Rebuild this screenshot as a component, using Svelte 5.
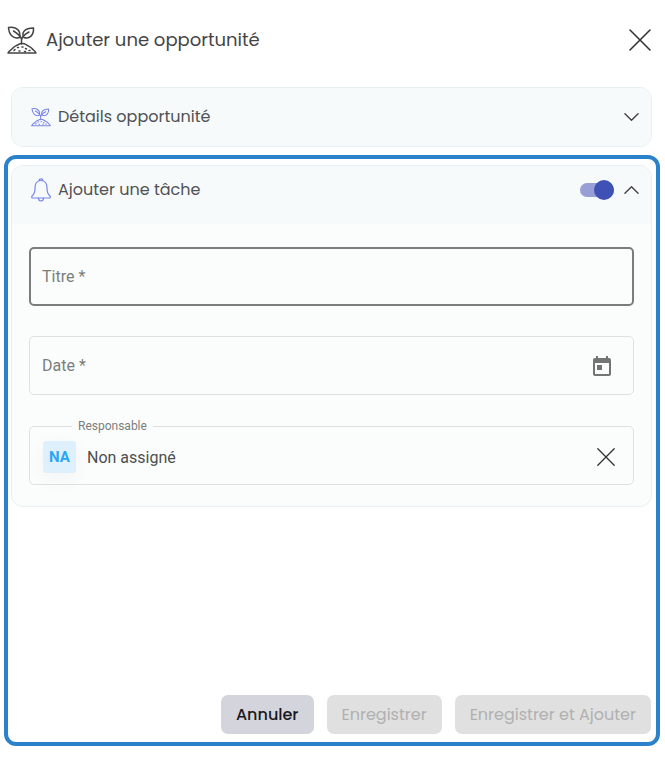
<script lang="ts">
  let title = $state('');
  let date = $state('');
  let assignee = $state('Non assigné');
  let detailsOpen = $state(false);
  let taskOpen = $state(true);
  let taskEnabled = $state(true);

  const canSave = $derived(title !== '' && date !== '');
</script>

{#snippet sprout()}
  <svg class="sprout" viewBox="0 0 30 30" aria-hidden="true">
    <path d="M14.500 19V14C13.500 10.500 10.500 8.500 6.500 6M14.500 15C15 11 18 9 22 7" />
    <path d="M12.500 12.500C6.500 14.500 2 10 1.500 2.500C8 1 14.500 5 12.500 12.500Z" />
    <path d="M17 12.500C14 8 17.500 3 26.500 3C27 10 22.500 14.500 17 12.500Z" />
    <path d="M1 28H29C28 25.500 26.500 25.500 25 23.500C23.500 21.500 21 21.500 19 19.500C17 18 13 18 11.500 19.500C9 21 7 21 5.500 23.500C4 25 2 25.500 1 28Z" />
    <path d="M7 25.500l1-1M10.500 22.500h1M12 26h1M15 22h1M18.500 23.500l1 .5M17.500 26.500h1M22 25.500h1" />
  </svg>
{/snippet}

{#snippet chevron(up: boolean)}
  <svg class="chevron" class:up viewBox="0 0 16 10" aria-hidden="true">
    <path d="M1 1.500L8 8.500L15 1.500" />
  </svg>
{/snippet}

{#snippet cross()}
  <svg class="cross" viewBox="0 0 22 22" aria-hidden="true">
    <path d="M1 1L21 21M21 1L1 21" />
  </svg>
{/snippet}

<div class="dialog" role="dialog" aria-labelledby="dialog-title">
  <header class="dialog-header">
    {@render sprout()}
    <h1 id="dialog-title">Ajouter une opportunité</h1>
    <button class="icon-btn close" aria-label="Fermer">{@render cross()}</button>
  </header>

  <section class="card details">
    <div class="card-header">
      {@render sprout()}
      <h2>Détails opportunité</h2>
      <button class="icon-btn" aria-label="Détails" aria-expanded={detailsOpen} onclick={() => (detailsOpen = !detailsOpen)}>
        {@render chevron(detailsOpen)}
      </button>
    </div>
  </section>

  <div class="highlight">
    <section class="card">
      <div class="card-header task">
        <svg class="bell" viewBox="0 0 20 24" aria-hidden="true">
          <path d="M8 2.500C8 .3 12 .3 12 2.500M10 2.500C5.500 2.500 4 6 4 10C4 15 3 16.500 1 18C.3 19.500 1 20 2 20H18C19 20 19.700 19.500 19 18C17 16.500 16 15 16 10C16 6 14.500 2.500 10 2.500Z" />
          <path d="M7.500 20C7.500 24 12.500 24 12.500 20" />
        </svg>
        <h2>Ajouter une tâche</h2>
        <input class="toggle" type="checkbox" role="switch" aria-label="Ajouter une tâche" bind:checked={taskEnabled} />
        <button class="icon-btn" aria-label="Tâche" aria-expanded={taskOpen} onclick={() => (taskOpen = !taskOpen)}>
          {@render chevron(taskOpen)}
        </button>
      </div>

      {#if taskOpen}
        <form class="card-body">
          <div class="field active">
            <label for="title">Titre *</label>
            <input id="title" type="text" bind:value={title} />
          </div>

          <div class="field">
            <label for="date">Date *</label>
            <input id="date" type="text" bind:value={date} />
            <button class="icon-btn" type="button" aria-label="Choisir une date">
              <svg class="calendar" viewBox="0 0 24 24" aria-hidden="true">
                <path d="M19 4h-1V2h-2v2H8V2H6v2H5c-1.110 0-1.990.9-1.990 2L3 20c0 1.100.890 2 2 2h14c1.100 0 2-.9 2-2V6c0-1.100-.9-2-2-2zm0 16H5V9h14v11zM7 11h5v5H7z" />
              </svg>
            </button>
          </div>

          <fieldset class="assignee">
            <legend><label for="assignee">Responsable</label></legend>
            <span class="avatar">NA</span>
            <input id="assignee" type="text" bind:value={assignee} />
            <button class="icon-btn clear" type="button" aria-label="Effacer" onclick={() => (assignee = '')}>
              {@render cross()}
            </button>
          </fieldset>
        </form>
      {/if}
    </section>

    <footer class="actions">
      <button class="btn">Annuler</button>
      <button class="btn" disabled={!canSave}>Enregistrer</button>
      <button class="btn" disabled={!canSave}>Enregistrer et Ajouter</button>
    </footer>
  </div>
</div>

<style>
  :global(body) {
    background: #fff;
  }

  .dialog {
    box-sizing: border-box;
    min-height: 100vh;
    padding: 0 5px 11px 4px;
    display: flex;
    flex-direction: column;
    font-family: Poppins, Inter, sans-serif;
    color: #444;
  }

  svg {
    display: block;
    fill: none;
    stroke: currentColor;
    stroke-linecap: round;
    stroke-linejoin: round;
  }

  h1,
  h2 {
    margin: 0;
    flex: 1;
    font-weight: 400;
  }

  h1 {
    font-size: 18px;
    line-height: 24px;
  }

  h2 {
    font-size: 16px;
    line-height: 24px;
    color: #505254;
  }

  button,
  input {
    font: inherit;
    color: inherit;
  }

  .icon-btn {
    padding: 0;
    border: 0;
    background: none;
    cursor: pointer;
  }

  .dialog-header {
    display: flex;
    align-items: center;
    gap: 9px;
    height: 80px;
    padding: 0 9px 0 3px;
    margin-bottom: 7px;
  }

  .dialog-header .sprout {
    width: 30px;
    height: 30px;
    stroke-width: 1.5;
  }

  .cross {
    width: 22px;
    height: 22px;
    stroke: #333;
    stroke-width: 1.6;
  }

  .card {
    border: 1px solid #e6eff1;
    border-radius: 12px;
    background: #fbfdfd;
    overflow: hidden;
  }

  .details {
    margin: 0 8px 8px 7px;
  }

  .card-header {
    display: flex;
    align-items: center;
    gap: 7px;
    height: 58px;
    padding: 0 12px 0 19px;
    background: #f7fafb;
  }

  .card-header.task {
    box-sizing: border-box;
    padding-bottom: 10px;
  }

  .card-header .sprout,
  .bell {
    width: 20px;
    color: #7b86e8;
  }

  .card-header .sprout {
    height: 20px;
    stroke-width: 1.6;
  }

  .bell {
    height: 24px;
    stroke-width: 1.2;
  }

  .chevron {
    width: 15px;
    height: 10px;
    stroke-width: 1.5;
  }

  .chevron.up {
    transform: rotate(180deg);
  }

  .toggle {
    appearance: none;
    display: flex;
    align-items: center;
    width: 34px;
    height: 14px;
    margin: 0 3px 0 0;
    border-radius: 7px;
    background: #bdbdbd;
  }

  .toggle::before {
    content: '';
    width: 20px;
    height: 20px;
    flex: none;
    border-radius: 50%;
    background: #fafafa;
  }

  .toggle:checked {
    justify-content: flex-end;
    background: #979fd6;
  }

  .toggle:checked::before {
    background: #3f51b5;
  }

  .highlight {
    flex: 1;
    display: flex;
    flex-direction: column;
    padding: 6px 4px 8px 3px;
    border: 4px solid #2b82cb;
    border-radius: 12px;
  }

  .card-body {
    padding: 23px 17px 21px 17px;
    font-family: Roboto, sans-serif;
    font-size: 16px;
  }

  .field,
  .assignee {
    display: flex;
    align-items: center;
    gap: 11px;
    border: 1px solid #dfe1e1;
    border-radius: 5px;
  }

  .field {
    box-sizing: border-box;
    height: 59px;
    padding: 0 19px 0 12px;
    margin-bottom: 30px;
    color: #7b7d7d;
  }

  .field.active {
    padding: 0 18px 0 11px;
    border: 2px solid #7b7d7d;
  }

  .field input,
  .assignee input {
    flex: 1;
    min-width: 0;
    padding: 0;
    border: 0;
    outline: 0;
    background: none;
  }

  .calendar {
    width: 24px;
    height: 24px;
    fill: #737575;
    stroke: none;
  }

  .assignee {
    margin: -6px 0 0;
    padding: 8px 18px 11px 13px;
    min-width: 0;
    color: #4d4f4f;
  }

  legend {
    margin-left: 29px;
    padding: 0 6px;
    font-size: 12px;
    line-height: 14px;
    color: #7b7d7d;
  }

  .avatar {
    width: 33px;
    height: 32px;
    border-radius: 3px;
    background: #def0fc;
    box-shadow: 0 6px 20px rgba(0, 0, 0, 0.04);
    color: #2ba5f5;
    font-weight: 700;
    font-size: 15px;
    line-height: 32px;
    text-align: center;
  }

  .clear .cross {
    width: 18px;
    height: 18px;
  }

  .actions {
    display: flex;
    flex-wrap: wrap;
    justify-content: flex-end;
    gap: 13px;
    margin-top: auto;
    padding-right: 1px;
  }

  .btn {
    height: 39px;
    padding: 0 15px;
    border: 0;
    border-radius: 7px;
    background: #d4d5dc;
    color: #18181c;
    font-size: 16px;
    font-weight: 500;
    cursor: pointer;
  }

  .btn:disabled {
    background: #e0e0e0;
    color: #b0b0b0;
    font-weight: 400;
    cursor: default;
  }
</style>
